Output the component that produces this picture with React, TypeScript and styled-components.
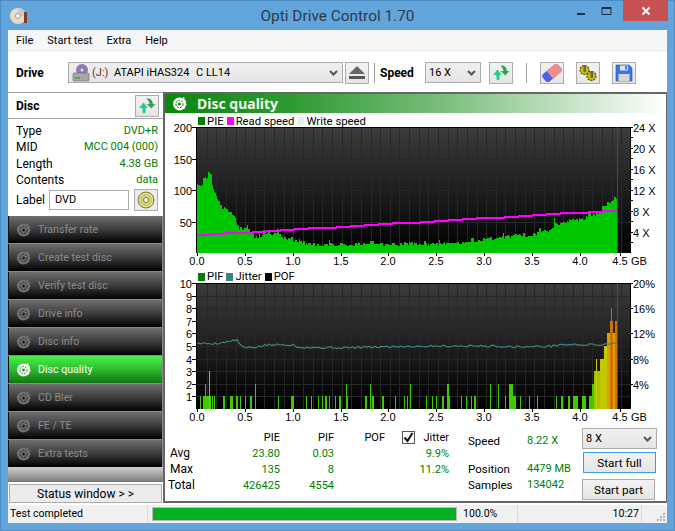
import React from "react";
import styled, { createGlobalStyle } from "styled-components";

const GlobalStyle = createGlobalStyle`
  html, body { margin: 0; padding: 0; background: #62a4dc; }
  body { font-family: Roboto, "Noto Sans", sans-serif; font-size: 12px; color: #000; }
`;

const ARIAL = `"Liberation Sans", Arial, sans-serif`;

// chart scale helpers, screen px relative to the plot svg
const PLOT_L = 31;
const PLOT_R = 465;
const PLOT_H = 126;
const GB = 96.4;

function makeRandom(seed: number) {
  let s = seed;
  return () => {
    s = (s * 1664525 + 1013904223) % 4294967296;
    return s / 4294967296;
  };
}

function interp(points: number[][], x: number) {
  for (let i = 1; i < points.length; i++) {
    if (x <= points[i][0]) {
      const [x0, y0] = points[i - 1];
      const [x1, y1] = points[i];
      return y0 + ((y1 - y0) * (x - x0)) / (x1 - x0);
    }
  }
  return points[points.length - 1][1];
}

const pieShape = [
  [0, 112], [0.03, 105], [0.06, 120], [0.1, 122], [0.13, 133], [0.15, 108], [0.19, 98], [0.22, 78],
  [0.3, 70], [0.36, 62], [0.41, 50], [0.43, 40], [0.52, 38], [0.57, 30], [0.6, 24], [0.66, 28],
  [0.72, 32], [0.78, 32], [0.83, 36], [0.88, 26], [0.95, 20], [1.1, 15], [1.5, 13], [2, 14],
  [2.5, 14], [2.8, 18], [3, 22], [3.3, 27], [3.5, 30], [3.67, 38], [3.72, 46], [3.85, 50],
  [4, 55], [4.1, 60], [4.2, 68], [4.3, 84], [4.38, 90],
];

function piePath() {
  const r = makeRandom(17);
  let d = "";
  let v = 0;
  let hold = 0;
  for (let px = 0; px < 421; px++) {
    const gb = px / GB;
    if (hold <= 0) {
      v = interp(pieShape, gb) + (r() - 0.5) * (gb < 0.45 ? 9 : 6);
      if (r() > 0.9) v += 4;
      hold = r() > 0.5 ? 2 : 1;
    }
    hold--;
    const h = px === 357 ? 55 : v;
    const height = (h / 200) * PLOT_H;
    d += `M${PLOT_L + 1 + px + 0.5} ${PLOT_H}V${(PLOT_H - height).toFixed(1)}`;
  }
  return d;
}

function speedPath() {
  let d = "";
  for (let px = 0; px < 421; px += 1) {
    const stepped = Math.floor(px / 14) * 14;
    const level = 3.4 + (4.8 * stepped) / 421;
    const y = PLOT_H - (level / 24) * PLOT_H;
    d += `${px === 0 ? "M" : "L"}${PLOT_L + 1 + px} ${Math.round(y)}`;
  }
  return d;
}

const jitterShape = [
  [0, 5.2], [0.2, 5.2], [0.33, 5.35], [0.41, 5.5], [0.46, 5], [0.5, 4.85], [0.6, 4.9], [0.75, 5.1],
  [1, 5.1], [1.05, 4.9], [1.5, 4.85], [2, 4.95], [2.5, 5], [3, 5], [3.4, 4.93], [3.7, 5], [3.75, 5.1],
  [4.2, 5.1], [4.38, 5.3],
];

function jitterPath() {
  const r = makeRandom(5);
  let d = "";
  for (let px = 0; px < 421; px += 2) {
    const val = interp(jitterShape, px / GB) + (r() - 0.5) * 0.16;
    d += `${px === 0 ? "M" : "L"}${PLOT_L + 1 + px} ${(PLOT_H - val * 12.6).toFixed(1)}`;
  }
  return d;
}

// [screen x start, width, value]
const pifBars: number[][] = [
  [200, 1, 1], [203, 6, 1], [205, 1, 2], [209, 1, 3], [210, 1, 1], [212, 1, 1], [214, 1, 1],
  [223, 2, 1], [230, 3, 1], [236, 2, 1], [240, 1, 1], [245, 1, 1], [250, 2, 1], [255, 1, 2], [278, 1, 1],
  [291, 3, 1], [306, 1, 1], [311, 1, 1], [318, 1, 1], [322, 1, 1], [325, 2, 1], [329, 1, 1], [335, 1, 1],
  [339, 2, 1], [346, 1, 2], [347, 1, 1], [365, 2, 1], [370, 1, 2], [372, 2, 1], [382, 2, 1], [395, 1, 1],
  [404, 1, 1], [407, 1, 1], [410, 1, 2], [426, 1, 1], [432, 1, 1], [436, 1, 1], [442, 2, 1], [447, 2, 2], [449, 1, 1],
  [461, 1, 1], [466, 1, 1], [471, 1, 1], [474, 2, 1], [490, 1, 2], [498, 1, 2], [505, 1, 1], [509, 4, 2], [513, 3, 1],
  [520, 1, 1], [529, 1, 1], [537, 1, 1], [556, 1, 1], [561, 2, 1], [568, 2, 1], [573, 5, 1], [582, 4, 1],
  [589, 4, 1], [592, 2, 2], [594, 2, 3], [596, 1, 4], [597, 3, 3], [600, 4, 4], [604, 1, 5], [605, 3, 5],
  [607, 1, 6], [608, 2, 6], [610, 2, 7], [611, 1, 8], [612, 1, 7], [613, 2, 6], [615, 2, 7],
];

function pifColor(v: number) {
  if (v <= 2) return "#40c800";
  if (v === 3) return "#a0c800";
  if (v <= 5) return "#c8c800";
  if (v === 6) return "#d8a000";
  return "#d07000";
}

type ChartProps = {
  left: { label: string; y: number }[];
  right: { label: string; y: number }[];
  hLines: number[];
  minorTicks: number[];
  id: string;
  children: React.ReactNode;
};

const xLabels = [
  ["0.0", 32], ["0.5", 80], ["1.0", 128], ["1.5", 176], ["2.0", 223], ["2.5", 271], ["3.0", 319], ["3.5", 367], ["4.0", 415], ["4.5", 455],
] as [string, number][];

function Chart({ left, right, hLines, minorTicks, id, children }: ChartProps) {
  const vLines = [];
  for (let i = 1; i < 45; i++) vLines.push(PLOT_L + 1 + Math.round(i * 9.64));
  return (
    <PlotSvg width="501" height="143" viewBox="0 0 501 143">
      <defs>
        <linearGradient id={id} x1="0" y1="0" x2="0" y2="1">
          <stop offset="0" stopColor="#3c3c3c" />
          <stop offset="1" stopColor="#000" />
        </linearGradient>
      </defs>
      <rect x={PLOT_L} y="0" width={PLOT_R - PLOT_L} height={PLOT_H} fill={`url(#${id})`} />
      <g stroke="#272727" shapeRendering="crispEdges">
        {vLines.map((x) => <line key={x} x1={x + 0.5} x2={x + 0.5} y1="0" y2={PLOT_H} />)}
        {hLines.map((y) => <line key={y} x1={PLOT_L} x2={PLOT_R} y1={y + 0.5} y2={y + 0.5} />)}
      </g>
      {children}
      <path d={`M${PLOT_L + 0.5} ${PLOT_H}V0.5H${PLOT_R + 0.5}V${PLOT_H}`} fill="none" stroke="#000" shapeRendering="crispEdges" />
      <line x1="452.5" x2="452.5" y1="0" y2={PLOT_H} stroke="#c41818" shapeRendering="crispEdges" />
      <g stroke="#000" shapeRendering="crispEdges">
        {left.map((t) => <line key={t.y} x1={PLOT_L - 4} x2={PLOT_L} y1={t.y + 0.5} y2={t.y + 0.5} />)}
        {minorTicks.map((y) => <line key={y} x1={PLOT_R} x2={PLOT_R + 3} y1={y + 0.5} y2={y + 0.5} />)}
        {xLabels.map(([, x]) => <line key={x} x1={x + 0.5} x2={x + 0.5} y1={PLOT_H} y2={PLOT_H + 3} />)}
      </g>
      {left.map((t) => <AxisText key={t.label} x={PLOT_L - 4} y={t.y + 5} textAnchor="end">{t.label}</AxisText>)}
      {right.map((t) => <AxisText key={t.label} x={PLOT_R + 3} y={t.y + 5}>{t.label}</AxisText>)}
      {xLabels.map(([label, x]) => <AxisText key={label} x={x} y={PLOT_H + 12} textAnchor="middle">{label}</AxisText>)}
      <AxisText x="466" y={PLOT_H + 12}>GB</AxisText>
    </PlotSvg>
  );
}

function DiscGlyph({ color = "#6e6e6e", hole = "#222", size = 16 }: { color?: string; hole?: string; size?: number }) {
  return (
    <svg width={size} height={size} viewBox="0 0 16 16">
      <circle cx="7.5" cy="8" r="6.5" fill={color} />
      <circle cx="7.5" cy="8" r="3.6" fill="none" stroke={hole} strokeWidth="1" strokeDasharray="2 1" />
      <circle cx="7.5" cy="8" r="1.5" fill={hole} />
      <path d="M11 1.5l1.5 1.5M14 5h-2.5M14.5 8.5h-2.5M13 12l-2-1" stroke={color} strokeWidth="1.4" />
    </svg>
  );
}

function ArrowsIcon() {
  return (
    <svg width="20" height="18" viewBox="0 0 20 18">
      <path d="M2 11L6.500 5.500 11 11H8.500v5H5.500C5.800 14 5.500 12.500 5 11z" fill="#22c98a" stroke="#9fe8c8" strokeWidth="0.4" />
      <path d="M9.500 7h3C12 5 11 3 9.500 1.500c3 -.5 6 .5 6.500 5.500h2.500L14.300 11.500z" fill="#2f9f55" stroke="#a8dcb8" strokeWidth="0.4" />
    </svg>
  );
}

function Chevron() {
  return (
    <svg width="9" height="6" viewBox="0 0 9 6">
      <path d="M1 1l3.500 3.500L8 1" fill="none" stroke="#555" strokeWidth="2" />
    </svg>
  );
}

const menuItems = ["File", "Start test", "Extra", "Help"];
const navItems = ["Transfer rate", "Create test disc", "Verify test disc", "Drive info", "Disc info", "Disc quality", "CD Bler", "FE / TE", "Extra tests"];

const discRows = [
  ["Type", "DVD+R"],
  ["MID", "MCC 004 (000)"],
  ["Length", "4.38 GB"],
  ["Contents", "data"],
];

export default function App() {
  const pie = piePath();
  const speed = speedPath();
  const jitter = jitterPath();
  return (
    <Window>
      <GlobalStyle />
      <TitleBar>
        <AppIcon width="18" height="18" viewBox="0 0 18 18">
          <circle cx="8" cy="9" r="8" fill="#e9dcc0" />
          <path d="M8 1a8 8 0 0 1 8 8H8z" fill="#c8c8c8" />
          <circle cx="8" cy="9" r="2.500" fill="#fff" stroke="#999" />
          <rect x="14" y="5" width="3" height="11" fill="#7a3a30" />
        </AppIcon>
        <TitleText>Opti Drive Control 1.70</TitleText>
        <WinButtons>
          <WinButton>
            <svg width="10" height="10" viewBox="0 0 10 10"><rect x="1" y="7" width="8" height="2" fill="#1f2f3f" /></svg>
          </WinButton>
          <WinButton>
            <svg width="12" height="10" viewBox="0 0 12 10"><path d="M1 1.500h9V8.500H1z" fill="none" stroke="#1f2f3f" strokeWidth="1" /><rect x="1" y="1" width="9" height="2" fill="#1f2f3f" /></svg>
          </WinButton>
          <CloseButton>
            <svg width="10" height="10" viewBox="0 0 10 10"><path d="M1.500 1.500l7 7M8.500 1.500l-7 7" stroke="#fff" strokeWidth="2" /></svg>
          </CloseButton>
        </WinButtons>
      </TitleBar>
      <Client>
        <MenuBar>
          {menuItems.map((m) => <MenuItem key={m}>{m}</MenuItem>)}
        </MenuBar>
        <Toolbar>
          <BoldLabel $width={52}>Drive</BoldLabel>
          <Combo $width={275}>
            <svg width="18" height="20" viewBox="0 0 18 20">
              <circle cx="10" cy="7" r="6" fill="#8e7cb0" />
              <circle cx="10" cy="7" r="1.500" fill="#ddd" />
              <rect x="1" y="10" width="16" height="8" rx="1" fill="#a8a8a8" stroke="#666" strokeWidth="0.6" />
              <rect x="3" y="14" width="5" height="1.500" fill="#3a3" />
            </svg>
            <ComboText>
              <DriveLetter>(J:)</DriveLetter>
              <DriveModel>ATAPI iHAS324</DriveModel>
              <span>C LL14</span>
            </ComboText>
            <Chevron />
          </Combo>
          <ToolButton $left={2}>
            <svg width="16" height="14" viewBox="0 0 16 14">
              <path d="M8 0L16 8H0z" fill="#666" />
              <rect x="0" y="10" width="16" height="3" fill="#555" />
            </svg>
          </ToolButton>
          <ToolSep $left={5} />
          <BoldLabel $left={5} $width={45}>Speed</BoldLabel>
          <Combo $width={56}>
            <ComboText>16 X</ComboText>
            <Chevron />
          </Combo>
          <ToolButton $left={8}><ArrowsIcon /></ToolButton>
          <ToolSep $left={13} />
          <ToolButton $left={13}>
            <svg width="20" height="18" viewBox="0 0 20 18">
              <g transform="rotate(-40 10 9)">
                <rect x="0" y="4" width="20" height="10" rx="3" fill="#4a62e8" />
                <path d="M7 4h10a3 3 0 0 1 3 3v4a3 3 0 0 1-3 3H7z" fill="#ef8d8d" />
              </g>
            </svg>
          </ToolButton>
          <ToolButton $left={12}>
            <svg width="20" height="18" viewBox="0 0 20 18">
              <circle cx="6.500" cy="6" r="4.500" fill="#c8c000" stroke="#5a5400" strokeWidth="1.200" strokeDasharray="2 1" />
              <circle cx="13.500" cy="12" r="4.500" fill="#c8c000" stroke="#5a5400" strokeWidth="1.200" strokeDasharray="2 1" />
              <rect x="5.500" y="1" width="2.500" height="7" fill="#666" />
              <rect x="12.500" y="7" width="2.500" height="7" fill="#666" />
            </svg>
          </ToolButton>
          <ToolButton $left={12}>
            <svg width="18" height="18" viewBox="0 0 18 18">
              <path d="M1 1h13l3 3v13H1z" fill="#3a78e8" stroke="#1f4aa0" strokeWidth="0.6" />
              <rect x="5" y="1.500" width="8" height="5" fill="#dfe6f0" />
              <rect x="10" y="2" width="2" height="3.500" fill="#3a78e8" />
              <rect x="3.500" y="10" width="11" height="7" fill="#d8d8d8" />
            </svg>
          </ToolButton>
        </Toolbar>
        <Body>
          <Sidebar>
            <DiscHeader>
              <BoldLabel>Disc</BoldLabel>
              <ToolButton><ArrowsIcon /></ToolButton>
            </DiscHeader>
            <DiscInfo>
              {discRows.map(([k, v]) => (
                <DiscRow key={k}>
                  <span>{k}</span>
                  <GreenValue>{v}</GreenValue>
                </DiscRow>
              ))}
              <LabelRow>
                <LabelName>Label</LabelName>
                <LabelInput>DVD</LabelInput>
                <DiscButton>
                  <svg width="20" height="20" viewBox="0 0 20 20">
                    <circle cx="10" cy="10" r="8" fill="#dcdc80" stroke="#77774a" />
                    <circle cx="10" cy="10" r="5" fill="none" stroke="#b5b55a" />
                    <circle cx="10" cy="10" r="2.500" fill="#f4f4e0" stroke="#77774a" />
                  </svg>
                </DiscButton>
              </LabelRow>
            </DiscInfo>
            <NavList>
              {navItems.map((n) => {
                const active = n === "Disc quality";
                return (
                  <NavButton key={n} $active={active}>
                    <DiscGlyph color={active ? "#fff" : "#707070"} hole={active ? "#1e9a1e" : "#222"} />
                    <span>{n}</span>
                  </NavButton>
                );
              })}
            </NavList>
            <NavFade />
            <StatusRow>
              <StatusButton>Status window &gt; &gt;</StatusButton>
            </StatusRow>
          </Sidebar>
          <Main>
            <PanelHeader>
              <DiscGlyph color="#fff" hole="#128a12" />
              <PanelTitle>Disc quality</PanelTitle>
            </PanelHeader>
            <Legend $top={2} $height={12}>
              <Swatch $color="#008000" /><span>PIE</span>
              <Swatch $color="#ff00ff" /><span>Read speed</span>
              <Swatch $color="#ececec" /><span>Write speed</span>
            </Legend>
            <Chart
              id="g1"
              left={[
                { label: "200", y: 0 }, { label: "150", y: 32 }, { label: "100", y: 63 }, { label: "50", y: 95 },
              ]}
              right={[
                { label: "24 X", y: 0 }, { label: "20 X", y: 21 }, { label: "16 X", y: 42 },
                { label: "12 X", y: 63 }, { label: "8 X", y: 84 }, { label: "4 X", y: 105 },
              ]}
              hLines={[32, 63, 95]}
              minorTicks={[0, 10, 21, 31, 42, 52, 63, 73, 84, 94, 105, 115]}
            >
              <path d={pie} stroke="#00c800" strokeWidth="1" fill="none" shapeRendering="crispEdges" />
              <path d={speed} stroke="#ff00ff" strokeWidth="2" fill="none" shapeRendering="crispEdges" />
            </Chart>
            <Legend $height={13}>
              <Swatch $color="#008000" /><span>PIF</span>
              <Swatch $color="#408080" /><span>Jitter</span>
              <Swatch $color="#000" /><span>POF</span>
            </Legend>
            <Chart
              id="g2"
              left={[10, 9, 8, 7, 6, 5, 4, 3, 2, 1].map((n) => ({ label: String(n), y: Math.round((10 - n) * 12.6) }))}
              right={[
                { label: "20%", y: 0 }, { label: "16%", y: 25 }, { label: "12%", y: 50 },
                { label: "8%", y: 76 }, { label: "4%", y: 101 },
              ]}
              hLines={[1, 2, 3, 4, 5, 6, 7, 8, 9].map((n) => Math.round(n * 12.6))}
              minorTicks={[0, 25, 50, 76, 101]}
            >
              <g shapeRendering="crispEdges">
                {pifBars.map(([x, w, v]) => (
                  <rect key={`${x}-${v}`} x={x - 165} y={PLOT_H - v * 12.6} width={w} height={v * 12.6} fill={pifColor(v)} />
                ))}
              </g>
              <path d={jitter} stroke="#408080" strokeWidth="1.2" fill="none" />
            </Chart>
            <Stats>
              <StatsTable>
                <span />
                <HeadCell>PIE</HeadCell>
                <HeadCell>PIF</HeadCell>
                <HeadCell>POF</HeadCell>
                <JitterHead>
                  <CheckBox>
                    <svg width="11" height="11" viewBox="0 0 11 11"><path d="M1.500 5.500l3 3.500 5-8" fill="none" stroke="#111" strokeWidth="2" /></svg>
                  </CheckBox>
                  Jitter
                </JitterHead>
                <RowLabel $left={2}>Avg</RowLabel>
                <ValueCell>23.80</ValueCell>
                <ValueCell>0.03</ValueCell>
                <span />
                <ValueCell>9.9%</ValueCell>
                <RowLabel $left={2}>Max</RowLabel>
                <ValueCell>135</ValueCell>
                <ValueCell>8</ValueCell>
                <span />
                <ValueCell>11.2%</ValueCell>
                <RowLabel>Total</RowLabel>
                <ValueCell>426425</ValueCell>
                <ValueCell>4554</ValueCell>
                <span />
                <span />
              </StatsTable>
              <SpeedBlock>
                <SpeedRow $gap={12}><span>Speed</span><GreenValue>8.22 X</GreenValue></SpeedRow>
                <SpeedRow><span>Position</span><GreenValue>4479 MB</GreenValue></SpeedRow>
                <SpeedRow><span>Samples</span><GreenValue>134042</GreenValue></SpeedRow>
              </SpeedBlock>
              <Controls>
                <Combo $width={75}>
                  <ComboText>8 X</ComboText>
                  <Chevron />
                </Combo>
                <ActionButton $primary>Start full</ActionButton>
                <ActionButton>Start part</ActionButton>
              </Controls>
            </Stats>
          </Main>
        </Body>
        <StatusBar>
          <StatusCell $width={140}>Test completed</StatusCell>
          <ProgressBox><ProgressFill style={{ width: "100%" }} /></ProgressBox>
          <StatusCell $width={57}>100.0%</StatusCell>
          <StatusCell $width={124} $right>10:27</StatusCell>
          <Grip width="12" height="12" viewBox="0 0 12 12">
            <g fill="#b5b5b5">
              <rect x="8" y="2" width="2" height="2" />
              <rect x="5" y="5" width="2" height="2" /><rect x="8" y="5" width="2" height="2" />
              <rect x="2" y="8" width="2" height="2" /><rect x="5" y="8" width="2" height="2" /><rect x="8" y="8" width="2" height="2" />
            </g>
          </Grip>
        </StatusBar>
      </Client>
    </Window>
  );
}

const Window = styled.div`
  width: 675px;
  height: 531px;
  box-sizing: border-box;
  display: flex;
  flex-direction: column;
  padding: 0 8px 8px;
  background: #62a4dc;
  box-shadow: inset 0 0 0 1px #4d8cc4;
  overflow: hidden;
`;

const TitleBar = styled.div`
  position: relative;
  height: 30px;
  flex: none;
  display: flex;
  align-items: center;
  justify-content: center;
`;

const AppIcon = styled.svg`
  position: absolute;
  left: 2px;
  top: 7px;
`;

const TitleText = styled.div`
  font-size: 15.4px;
  color: #2c3a4a;
  margin-top: 1px;
`;

const WinButtons = styled.div`
  position: absolute;
  top: 0;
  right: -1px;
  display: flex;
`;

const WinButton = styled.div`
  width: 26px;
  height: 21px;
  display: flex;
  align-items: center;
  justify-content: center;
`;

const CloseButton = styled(WinButton)`
  width: 45px;
  margin-left: 3px;
  background: #c75050;
`;

const Client = styled.div`
  flex: 1;
  display: flex;
  flex-direction: column;
  background: #fff;
  min-height: 0;
`;

const MenuBar = styled.div`
  height: 20px;
  flex: none;
  display: flex;
  align-items: center;
  gap: 14px;
  padding-left: 8px;
  background: #f5f6f7;
  border-bottom: 1px solid #e8e8e8;
`;

const MenuItem = styled.span`
  font-size: 11px;
`;

const Toolbar = styled.div`
  height: 41px;
  flex: none;
  box-sizing: border-box;
  padding: 2px 0 0 8px;
  display: flex;
  align-items: center;
`;

const BoldLabel = styled.span<{ $left?: number; $width?: number }>`
  font-weight: 700;
  font-size: 12px;
  flex: none;
  margin-left: ${(p) => p.$left ?? 0}px;
  ${(p) => (p.$width ? `width: ${p.$width}px;` : "")}
`;

const Combo = styled.div<{ $width: number }>`
  width: ${(p) => p.$width}px;
  height: 21px;
  flex: none;
  box-sizing: border-box;
  padding: 0 4px 0 3px;
  display: flex;
  align-items: center;
  gap: 2px;
  border: 1px solid #acacac;
  background: linear-gradient(#f0f0f0, #e5e5e5);
  font-size: 11px;
`;

const ComboText = styled.span`
  flex: 1;
  display: flex;
  white-space: nowrap;
`;

const DriveLetter = styled.span`
  width: 22px;
  color: #6a3a10;
`;

const DriveModel = styled.span`
  width: 82px;
`;

const ToolButton = styled.div<{ $left?: number }>`
  width: 24px;
  height: 22px;
  box-sizing: border-box;
  flex: none;
  margin-left: ${(p) => p.$left ?? 0}px;
  display: flex;
  align-items: center;
  justify-content: center;
  border: 1px solid #acacac;
  background: linear-gradient(#f2f2f2, #e5e5e5);
`;

const ToolSep = styled.div<{ $left?: number }>`
  width: 1px;
  height: 20px;
  flex: none;
  margin-left: ${(p) => p.$left ?? 0}px;
  background: #a0a0a0;
`;

const Body = styled.div`
  flex: 1;
  min-height: 0;
  display: flex;
`;

const Sidebar = styled.div`
  width: 155px;
  flex: none;
  display: flex;
  flex-direction: column;
  box-sizing: border-box;
  border-top: 1px solid #a0a0a0;
`;

const DiscHeader = styled.div`
  height: 25px;
  flex: none;
  display: flex;
  align-items: center;
  justify-content: space-between;
  padding: 0 4px 0 8px;
  border-bottom: 1px solid #a0a0a0;
`;

const DiscInfo = styled.div`
  height: 97px;
  flex: none;
  box-sizing: border-box;
  padding: 4px 5px 0 8px;
  font-size: 12px;
`;

const DiscRow = styled.div`
  display: flex;
  justify-content: space-between;
  height: 16.4px;
  line-height: 16px;
`;

const GreenValue = styled.span`
  color: #008000;
  font-size: 11px;
`;

const LabelRow = styled.div`
  display: flex;
  align-items: center;
  height: 22px;
`;

const LabelName = styled.span`
  width: 33px;
  flex: none;
`;

const LabelInput = styled.div`
  width: 81px;
  height: 20px;
  box-sizing: border-box;
  padding-left: 5px;
  font-size: 11px;
  line-height: 18px;
  border: 1px solid #acacac;
`;

const DiscButton = styled.div`
  width: 24px;
  height: 22px;
  box-sizing: border-box;
  margin-left: 5px;
  display: flex;
  align-items: center;
  justify-content: center;
  border: 1px solid #acacac;
  background: #ececec;
`;

const NavList = styled.div`
  display: flex;
  flex-direction: column;
  gap: 1px;
  flex: none;
  background: #8a8a8a;
  padding-right: 1px;
`;

const NavButton = styled.div<{ $active?: boolean }>`
  height: 27px;
  box-sizing: border-box;
  display: flex;
  align-items: center;
  gap: 6px;
  padding-left: 7px;
  font-size: 10.6px;
  border-left: 1px solid #111;
  color: ${(p) => (p.$active ? "#fff" : "#8c8c8c")};
  background: ${(p) =>
    p.$active
      ? "linear-gradient(#48f048, #30c030 45%, #0f760f)"
      : "linear-gradient(#6e6e6e, #3c3c3c 50%, #000)"};
`;

const NavFade = styled.div`
  height: 14px;
  flex: none;
  background: linear-gradient(#d0d0d0, #808080);
`;

const StatusRow = styled.div`
  flex: 1;
  display: flex;
  align-items: center;
  padding: 0 1px;
  border-top: 1px solid #777;
`;

const StatusButton = styled.div`
  width: 100%;
  height: 19px;
  box-sizing: border-box;
  display: flex;
  align-items: center;
  justify-content: center;
  border: 1px solid #acacac;
  background: #ececec;
  font-size: 12px;
`;

const Main = styled.div`
  width: 504px;
  height: 411px;
  flex: none;
  box-sizing: border-box;
  display: flex;
  flex-direction: column;
  border-top: 2px solid #666;
  border-left: 2px solid #666;
  border-right: 1px solid #666;
  border-bottom: 2px solid #666;
`;

const PanelHeader = styled.div`
  height: 19px;
  flex: none;
  display: flex;
  align-items: center;
  gap: 9px;
  padding-left: 7px;
  background: linear-gradient(90deg, #0c860c, #2f9a33 25%, #79bd7a 55%, #fff);
`;

const PanelTitle = styled.span`
  font-family: "Noto Sans", sans-serif;
  font-size: 14px;
  font-weight: 700;
  color: #eef8ee;
`;

const Legend = styled.div<{ $top?: number; $height: number }>`
  height: ${(p) => p.$height}px;
  flex: none;
  padding-top: ${(p) => p.$top ?? 0}px;
  padding-left: 33px;
  display: flex;
  align-items: center;
  font-size: 11.3px;
  line-height: 13px;

  span + div {
    margin-left: 3px;
  }
`;

const Swatch = styled.div<{ $color: string }>`
  width: 7px;
  height: 8px;
  margin-right: 2px;
  background: ${(p) => p.$color};
`;

const PlotSvg = styled.svg`
  display: block;
  flex: none;
  overflow: visible;
`;

const AxisText = styled.text`
  font-family: ${ARIAL};
  font-size: 11px;
  fill: #000;
`;

const Stats = styled.div`
  flex: 1;
  display: flex;
  font-size: 12px;
`;

const StatsTable = styled.div`
  display: grid;
  grid-template-columns: 45px 67px 54px 51px 64px;
  grid-auto-rows: 16px;
  padding: 3px 0 0 3px;
  align-items: center;
`;

const HeadCell = styled.span`
  text-align: right;
  font-size: 11px;
`;

const JitterHead = styled.span`
  display: flex;
  align-items: center;
  justify-content: space-between;
  padding-left: 17px;
  font-size: 11px;
`;

const CheckBox = styled.span`
  width: 11px;
  height: 11px;
  display: block;
  border: 1px solid #555;
`;

const RowLabel = styled.span<{ $left?: number }>`
  padding-left: ${(p) => p.$left ?? 0}px;
`;

const ValueCell = styled.span`
  text-align: right;
  color: #008000;
  font-size: 11px;
`;

const SpeedBlock = styled.div`
  margin-left: 19px;
  padding-top: 7px;
  display: flex;
  flex-direction: column;
  font-size: 11.5px;
`;

const SpeedRow = styled.div<{ $gap?: number }>`
  display: grid;
  grid-template-columns: 59px auto;
  height: 16px;
  line-height: 16px;
  margin-bottom: ${(p) => p.$gap ?? 0}px;
`;

const Controls = styled.div`
  margin-left: auto;
  margin-right: 9px;
  padding-top: 2px;
  display: flex;
  flex-direction: column;
  align-items: flex-start;
  gap: 3px;
`;

const ActionButton = styled.div<{ $primary?: boolean }>`
  width: 73px;
  height: 21px;
  box-sizing: border-box;
  font-size: 11.7px;
  margin-left: ${(p) => (p.$primary ? 1 : 0)}px;
  margin-top: ${(p) => (p.$primary ? 0 : 3)}px;
  display: flex;
  align-items: center;
  justify-content: center;
  border: 1px solid ${(p) => (p.$primary ? "#3c9be8" : "#acacac")};
  background: linear-gradient(#f2f2f2, #e5e5e5);
`;

const StatusBar = styled.div`
  height: 18px;
  flex: none;
  display: flex;
  align-items: center;
  background: #f0f0f0;
  font-size: 10.6px;
`;

const StatusCell = styled.div<{ $width: number; $right?: boolean }>`
  width: ${(p) => p.$width}px;
  height: 100%;
  flex: none;
  box-sizing: border-box;
  padding: 0 2px;
  line-height: 18px;
  text-align: ${(p) => (p.$right ? "right" : "left")};
  border-right: 1px solid #d8d8d8;
  white-space: nowrap;
`;

const ProgressBox = styled.div`
  width: 303px;
  height: 12px;
  margin: 0 4px;
  flex: none;
  border: 1px solid #bbb;
  background: #e6e6e6;
`;

const ProgressFill = styled.div`
  height: 100%;
  background: #06b025;
`;

const Grip = styled.svg`
  margin-left: auto;
  align-self: flex-end;
`;
